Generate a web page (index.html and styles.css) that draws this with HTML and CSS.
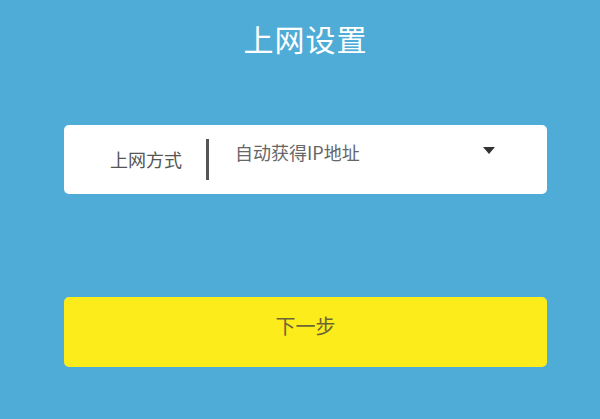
FILE: index.html
```html
<!DOCTYPE html>
<html lang="zh-CN">
<head>
<meta charset="utf-8">
<title>上网设置</title>
<link rel="stylesheet" href="styles.css">
</head>
<body>
<div class="page">
  <h1 class="title">上网设置</h1>
  <div class="card">
    <div class="label">上网方式</div>
    <div class="divider"></div>
    <div class="value">自动获得IP地址</div>
    <div class="arrow"></div>
  </div>
  <button class="next">下一步</button>
</div>
</body>
</html>
```
FILE: styles.css
```css
html, body {
  margin: 0;
  padding: 0;
  background: #4facd6;
}
.page {
  width: 600px;
  height: 419px;
  box-sizing: border-box;
  padding: 0 53px 0 64px;
  display: flex;
  flex-direction: column;
  font-family: "Noto Sans CJK SC", "Noto Sans", sans-serif;
}
.title {
  margin: 18px 0 0 0;
  height: 40px;
  line-height: 40px;
  font-size: 30px;
  font-weight: 400;
  color: #ffffff;
  text-align: center;
  letter-spacing: 1px;
}
.card {
  margin-top: 67px;
  height: 69px;
  background: #ffffff;
  border-radius: 5px;
  display: flex;
  align-items: flex-start;
  padding-left: 46px;
  box-sizing: border-box;
}
.label {
  margin-top: 21px;
  font-size: 18px;
  line-height: 26px;
  color: #555555;
  width: 96px;
}
.divider {
  margin-top: 14px;
  width: 3px;
  height: 41px;
  background: #555555;
}
.value {
  margin-top: 14px;
  margin-left: 26px;
  font-size: 18px;
  line-height: 26px;
  color: #666666;
  width: 248px;
}
.arrow {
  margin-top: 22px;
  width: 0;
  height: 0;
  border-left: 6px solid transparent;
  border-right: 6px solid transparent;
  border-top: 7px solid #333333;
}
.next {
  margin-top: 103px;
  height: 70px;
  border: none;
  border-radius: 5px;
  background: #fdec1b;
  color: #6b6536;
  font-family: "Noto Sans CJK SC", "Noto Sans", sans-serif;
  font-size: 20px;
  padding: 0 0 14px 0;
  cursor: pointer;
}
```
